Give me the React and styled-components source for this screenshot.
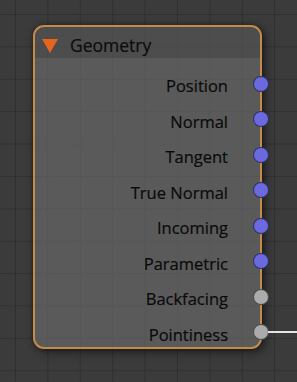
import React from "react";
import styled, { createGlobalStyle } from "styled-components";

const GlobalStyle = createGlobalStyle`
  html, body {
    margin: 0;
    padding: 0;
    background: #3a3a3a;
  }
`;

// node editor canvas with the grid
const Canvas = styled.div`
  width: 297px;
  height: 382px;
  box-sizing: border-box;
  padding: 25px 0 0 33px;
  overflow: hidden;
  background-color: #3b3b3b;
  background-image: linear-gradient(to right, #303030 1px, transparent 1px),
    linear-gradient(to bottom, #303030 1px, transparent 1px);
  background-size: 32.4px 32.4px;
  background-position: 15px 14px;
  font-family: "Open Sans", "DejaVu Sans", sans-serif;
`;

const Node = styled.div`
  width: 229px;
  height: 324px;
  box-sizing: border-box;
  border: 2px solid #c48a48;
  border-radius: 11px;
  background: rgba(114, 114, 114, 0.58);
  box-shadow: 3px 3px 10px rgba(0, 0, 0, 0.5), 0 0 4px rgba(0, 0, 0, 0.35);
`;

const Header = styled.div`
  height: 31px;
  box-sizing: border-box;
  padding: 5px 0 0 7px;
  display: flex;
  align-items: center;
  gap: 12px;
  background: rgba(0, 0, 0, 0.14);
  border-radius: 9px 9px 0 0;
`;

const Title = styled.span`
  font-size: 17.5px;
  color: #0c0c0c;
  -webkit-text-stroke: 0.2px #0c0c0c;
`;

const Body = styled.div`
  padding-top: 8px;
`;

const Row = styled.div`
  height: 35.5px;
  display: flex;
  align-items: center;
  justify-content: flex-end;
`;

const Label = styled.span`
  font-size: 16.5px;
  color: #0a0a0a;
  -webkit-text-stroke: 0.2px #0a0a0a;
  padding-top: 4px;
  margin-right: 25px;
`;

const Socket = styled.span`
  position: relative;
  width: 16px;
  height: 16px;
  box-sizing: border-box;
  margin-right: -9px;
  border-radius: 50%;
  border: 1px solid rgba(0, 0, 0, 0.55);
  background: ${(p) => (p.$kind === "vector" ? "#6a6ade" : "#ababab")};

  ${(p) =>
    p.$linked &&
    `
    &::after {
      content: "";
      position: absolute;
      left: 14px;
      top: 6px;
      width: 40px;
      height: 2px;
      background: #e4e4e4;
      box-shadow: 0 0 1px rgba(0, 0, 0, 0.4);
    }
  `}
`;

const outputs = [
  { name: "Position", kind: "vector" },
  { name: "Normal", kind: "vector" },
  { name: "Tangent", kind: "vector" },
  { name: "True Normal", kind: "vector" },
  { name: "Incoming", kind: "vector" },
  { name: "Parametric", kind: "vector" },
  { name: "Backfacing", kind: "value" },
  { name: "Pointiness", kind: "value", linked: true },
];

const Collapse = () => (
  <svg width="16" height="15" viewBox="0 0 16 15">
    <polygon points="0,1 16,1 8,15" fill="#e4661e" />
  </svg>
);

export default function App() {
  return (
    <>
      <GlobalStyle />
      <Canvas>
        <Node>
          <Header>
            <Collapse />
            <Title>Geometry</Title>
          </Header>
          <Body>
            {outputs.map((o) => (
              <Row key={o.name}>
                <Label>{o.name}</Label>
                <Socket $kind={o.kind} $linked={o.linked} />
              </Row>
            ))}
          </Body>
        </Node>
      </Canvas>
    </>
  );
}
